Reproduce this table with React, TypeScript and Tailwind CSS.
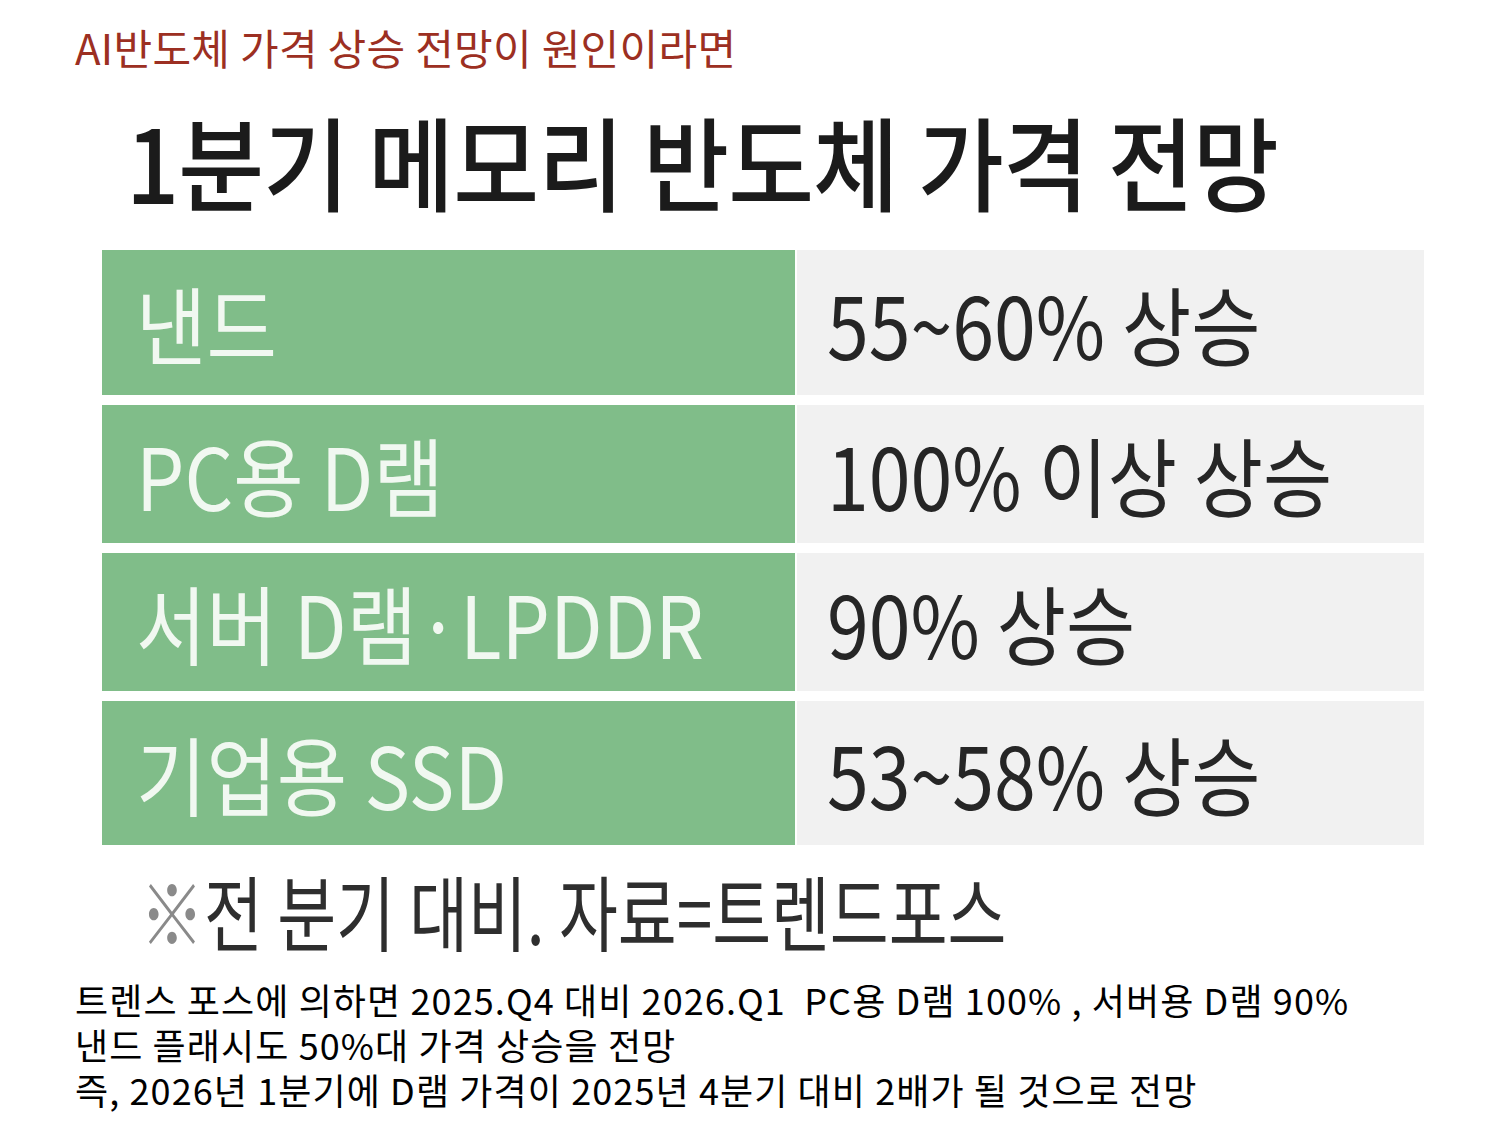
import React from "react";

const KR = { fontFamily: '"Noto Sans CJK KR", "Noto Sans", sans-serif' };

const rows = [
  { left: "낸드", right: "55~60% 상승", h: "h-[145px]" },
  { left: "PC용 D램", right: "100% 이상 상승", h: "h-[138px]" },
  { left: "서버 D램·LPDDR", right: "90% 상승", h: "h-[138px]" },
  { left: "기업용 SSD", right: "53~58% 상승", h: "h-[144px]" },
];

export default function App() {
  return (
    <div className="w-[1500px] h-[1125px] bg-white overflow-hidden" style={KR}>
      <div className="pl-[75px] pt-[20px] h-[100px] text-[42px] leading-[54px] tracking-[0.3px] text-[#9c2f22]">
        AI반도체 가격 상승 전망이 원인이라면
      </div>

      <div className="h-[150px] pl-[126px] flex items-start">
        <div className="text-[102px] leading-[120px] font-medium text-[#1b1b1b] whitespace-nowrap origin-left scale-x-[0.915] tracking-[-1px]">
          1분기 메모리 반도체 가격 전망
        </div>
      </div>

      <div className="ml-[102px] w-[1322px] flex flex-col gap-[10px]">
        {rows.map((r, i) => (
          <div key={i} className={`flex gap-[2px] ${r.h}`}>
            <div className="w-[693px] bg-[#80bd89] flex items-center pl-[34px]">
              <span className="text-[86px] leading-none text-[#f1f8f1] whitespace-nowrap origin-left scale-x-[0.89] inline-block">
                {r.left}
              </span>
            </div>
            <div className="flex-1 bg-[#f1f1f1] flex items-center pl-[30px]">
              <span className="text-[86px] leading-none text-[#262626] whitespace-nowrap origin-left scale-x-[0.875] inline-block">
                {r.right}
              </span>
            </div>
          </div>
        ))}
      </div>

      <div className="pl-[140px] h-[130px] flex items-center">
        <span className="text-[82px] leading-none text-[#2e2e2e] whitespace-nowrap origin-left scale-x-[0.78] inline-block">
          <span className="text-[#8a8a8a]">※</span>전 분기 대비. 자료=트렌드포스
        </span>
      </div>

      <div className="pl-[75px] text-[36px] leading-[45px] tracking-[1.1px] text-black mt-[2px]">
        <div className="whitespace-pre">트렌스 포스에 의하면 2025.Q4 대비 2026.Q1  PC용 D램 100% , 서버용 D램 90%</div>
        <div>낸드 플래시도 50%대 가격 상승을 전망</div>
        <div>즉, 2026년 1분기에 D램 가격이 2025년 4분기 대비 2배가 될 것으로 전망</div>
      </div>
    </div>
  );
}
